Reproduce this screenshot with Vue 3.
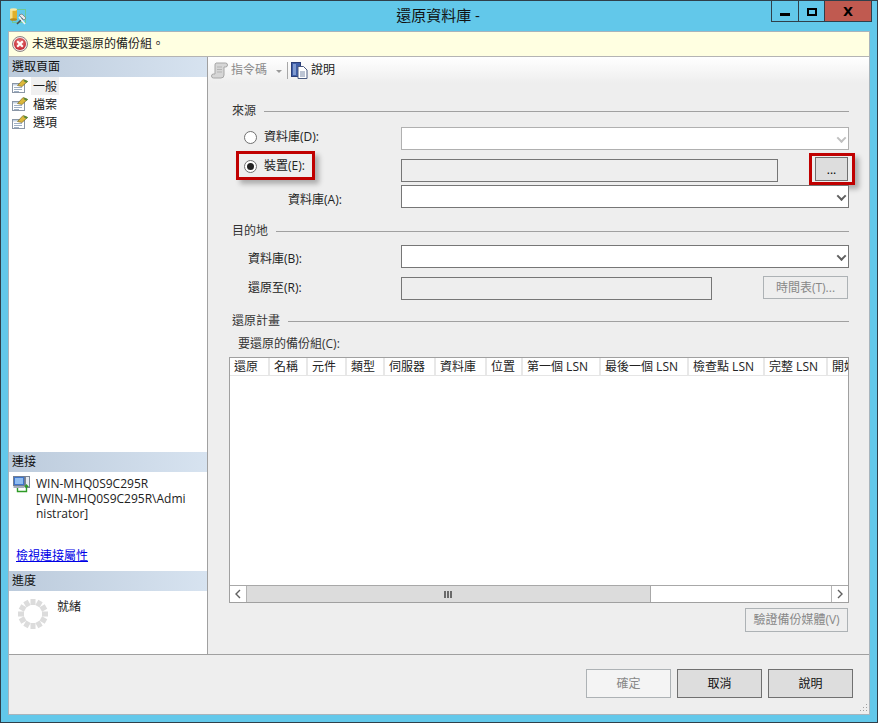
<script setup>
const columns = [
  { label: '還原', width: 40 },
  { label: '名稱', width: 38 },
  { label: '元件', width: 39 },
  { label: '類型', width: 38 },
  { label: '伺服器', width: 51 },
  { label: '資料庫', width: 51 },
  { label: '位置', width: 36 },
  { label: '第一個 LSN', width: 78 },
  { label: '最後一個 LSN', width: 88 },
  { label: '檢查點 LSN', width: 76 },
  { label: '完整 LSN', width: 63 },
  { label: '開始日期', width: 60 },
]

const pages = ['一般', '檔案', '選項']

const spinnerDots = Array.from({ length: 12 }, (_, i) => i * 30)
</script>

<template>
  <div class="window">
    <header class="titlebar">
      <svg class="app-icon" width="17" height="17" viewBox="0 0 17 17">
        <rect x="2.5" y="1.5" width="13" height="13" fill="none" stroke="#7ac943" stroke-dasharray="1 1" />
        <rect x="0" y="1.5" width="7" height="10" fill="#e0b02c" />
        <rect x="0" y="1.5" width="2.5" height="10" fill="#f6e08c" />
        <ellipse cx="3.5" cy="1.5" rx="3.5" ry="1.3" fill="#f8e9a8" />
        <ellipse cx="3.5" cy="11.5" rx="3.5" ry="1.3" fill="#b98a1c" />
        <path d="M7 16 L14 9" stroke="#4a4a4a" stroke-width="1.6" />
        <path d="M9 7 L12 6 L16 10 L14 12 Z" fill="#e8e8e8" stroke="#666" stroke-width="0.6" />
        <path d="M9 9 L15 16" stroke="#f4f4f4" stroke-width="1.6" />
      </svg>
      <h1 class="title">還原資料庫 -</h1>
      <div class="win-controls">
        <button class="win-btn min"><span class="min-glyph"></span></button>
        <button class="win-btn max"><span class="max-glyph"></span></button>
        <button class="win-btn close"><span class="close-glyph">X</span></button>
      </div>
    </header>

    <div class="client">
      <div class="message">
        <svg width="16" height="16" viewBox="0 0 16 16">
          <defs>
            <radialGradient id="err" cx="50%" cy="40%" r="60%">
              <stop offset="0" stop-color="#ee8a8a" />
              <stop offset="1" stop-color="#c2202a" />
            </radialGradient>
          </defs>
          <circle cx="8" cy="8" r="7.5" fill="#efe6e6" stroke="#8d8585" />
          <circle cx="8" cy="8" r="6" fill="url(#err)" />
          <path d="M5.2 5.2 L10.8 10.8 M10.8 5.2 L5.2 10.8" stroke="#fff" stroke-width="2" />
        </svg>
        <span>未選取要還原的備份組。</span>
      </div>

      <div class="body">
        <aside class="sidebar">
          <div class="side-head">選取頁面</div>
          <ul class="pages">
            <li v-for="(page, i) in pages" :key="page" class="page-item">
              <svg width="16" height="14" viewBox="0 0 16 14">
                <rect x="0.5" y="4.5" width="12" height="9" fill="#fff" stroke="#8a96a6" />
                <rect x="1" y="5" width="11" height="1.5" fill="#c4d2e2" />
                <path d="M2 8.5 H10 M2 10.5 H10 M2 12.5 H7" stroke="#9fb0c4" />
                <path d="M5.5 6.5 L11 0.5 L15.5 2.5 L10 7.5 Z" fill="#dcb83c" stroke="#6b5a1c" stroke-width="0.6" />
                <path d="M12.5 0.5 L16 2.2 L14.5 4 L11.5 2 Z" fill="#5c8a3a" />
              </svg>
              <span :class="{ active: i === 0 }">{{ page }}</span>
            </li>
          </ul>

          <div class="side-head conn-head">連接</div>
          <div class="conn">
            <svg width="17" height="17" viewBox="0 0 17 17">
              <rect x="0.5" y="0.5" width="11" height="9" fill="#3e74cc" stroke="#707e92" />
              <rect x="2" y="2" width="8" height="6" fill="#8fbcf0" />
              <rect x="0.5" y="10" width="11" height="2" fill="#a4aebc" />
              <rect x="12.5" y="0.5" width="4" height="11" fill="#e6eaf0" stroke="#7a8494" />
              <path d="M4.5 12 V15.5 H13.5 V10" fill="none" stroke="#2e9a26" stroke-width="1.4" />
              <path d="M11 11 L13.5 8 L16 11 Z" fill="#2e9a26" />
            </svg>
            <div class="conn-text">WIN-MHQ0S9C295R<br />[WIN-MHQ0S9C295R\Admi<br />nistrator]</div>
          </div>
          <a class="conn-link" href="#">檢視連接屬性</a>

          <div class="side-head">進度</div>
          <div class="progress">
            <svg width="30" height="30" viewBox="0 0 30 30">
              <rect
                v-for="deg in spinnerDots"
                :key="deg"
                x="12.5"
                y="0"
                width="5"
                height="6"
                fill="#dcdcdc"
                :transform="`rotate(${deg} 15 15)`"
              />
            </svg>
            <span>就緒</span>
          </div>
        </aside>

        <main class="panel">
          <div class="toolbar">
            <svg width="17" height="17" viewBox="0 0 17 17">
              <path d="M5 1 H14.5 A2 2 0 0 1 14.5 5 H13 V13 A3 3 0 0 1 10 16 H2.5 A2 2 0 0 1 2.5 12 H4 V3 A2 2 0 0 1 5 1 Z" fill="#d6d6d6" stroke="#a6a6a6" />
              <path d="M6 5 H11 M6 7.5 H11 M6 10 H11" stroke="#b4b4b4" />
            </svg>
            <span class="tool-off">指令碼</span>
            <span class="tool-caret"></span>
            <span class="tool-sep"></span>
            <svg width="17" height="17" viewBox="0 0 17 17">
              <rect x="0.5" y="0.5" width="9" height="14" fill="#3f5fa8" stroke="#2b3f78" />
              <rect x="2" y="2" width="3" height="11" fill="#7f9ad0" />
              <path d="M7 4.5 H12.5 L16 8 V16.5 H7 Z" fill="#fff" stroke="#4a5a80" />
              <path d="M9 10 H14 M9 12 H14 M9 14 H14" stroke="#7a8aa8" />
            </svg>
            <span>說明</span>
          </div>

          <div class="form">
            <div class="legend first"><span>來源</span><i></i></div>

            <div class="row r-d">
              <label class="radio-label"><span class="radio"></span>資料庫(D):</label>
              <div class="field off combo"><span class="chev off-chev"></span></div>
            </div>

            <div class="row r-e">
              <label class="radio-label">
                <span class="radio on"></span>裝置(E):
                <span class="callout callout-radio"></span>
              </label>
              <div class="field readonly device"></div>
              <button class="browse">
                ...
                <span class="callout callout-browse"></span>
              </button>
            </div>

            <div class="row r-a">
              <label class="text-label indent">資料庫(A):</label>
              <div class="field combo"><span class="chev"></span></div>
            </div>

            <div class="legend second"><span>目的地</span><i></i></div>

            <div class="row r-b">
              <label class="text-label small-indent">資料庫(B):</label>
              <div class="field combo"><span class="chev"></span></div>
            </div>

            <div class="row r-r">
              <label class="text-label small-indent">還原至(R):</label>
              <div class="field readonly target"></div>
              <button class="btn disabled schedule">時間表(T)...</button>
            </div>

            <div class="legend third"><span>還原計畫</span><i></i></div>
            <div class="grid-label">要還原的備份組(C):</div>

            <div class="grid">
              <div class="grid-head">
                <div
                  v-for="col in columns"
                  :key="col.label"
                  class="grid-col"
                  :style="{ width: col.width + 'px' }"
                >{{ col.label }}</div>
              </div>
              <div class="grid-body"></div>
              <div class="hscroll">
                <span class="arrow">
                  <svg width="8" height="10" viewBox="0 0 8 10"><path d="M6 1 L2 5 L6 9" fill="none" stroke="#606060" stroke-width="1.4" /></svg>
                </span>
                <div class="thumb">
                  <span class="grip"></span>
                </div>
                <div class="track"></div>
                <span class="arrow right">
                  <svg width="8" height="10" viewBox="0 0 8 10"><path d="M2 1 L6 5 L2 9" fill="none" stroke="#606060" stroke-width="1.4" /></svg>
                </span>
              </div>
            </div>

            <div class="verify-row">
              <button class="btn disabled verify">驗證備份媒體(V)</button>
            </div>
          </div>
        </main>
      </div>

      <footer class="footer">
        <button class="btn disabled big ok">確定</button>
        <button class="btn big">取消</button>
        <button class="btn big">說明</button>
        <svg class="size-grip" width="10" height="10" viewBox="0 0 10 10">
          <path d="M8 1 H9 V2 H8 Z M5 4 H6 V5 H5 Z M8 4 H9 V5 H8 Z M2 7 H3 V8 H2 Z M5 7 H6 V8 H5 Z M8 7 H9 V8 H8 Z" fill="#a0a0a0" />
        </svg>
      </footer>
    </div>
  </div>
</template>

<style>
html, body { margin: 0; background: #62c8ea; }
</style>

<style scoped>
* { box-sizing: border-box; }

.window {
  width: 878px;
  height: 723px;
  display: flex;
  flex-direction: column;
  background: #62c8ea;
  border: 1px solid #2f3f4a;
  padding: 0 7px 7px;
  overflow: hidden;
  font: 12px/16px "Open Sans", "Noto Sans CJK TC", sans-serif;
  color: #1a1a1a;
}

.titlebar {
  height: 30px;
  flex: none;
  display: flex;
  align-items: center;
  position: relative;
}
.app-icon { margin: 0 0 0 2px; }
.title {
  position: absolute;
  left: 0;
  right: 2px;
  top: 4px;
  margin: 0;
  text-align: center;
  font-size: 15px;
  line-height: 20px;
  font-weight: 400;
  color: #111;
}
.win-controls {
  position: absolute;
  right: -2px;
  top: 0;
  display: flex;
  height: 21px;
  border: 1px solid #2f3f4a;
  border-top: 0;
}
.win-btn {
  border: 0;
  padding: 0;
  background: #62c8ea;
  display: flex;
  align-items: center;
  justify-content: center;
}
.win-btn.min { width: 27px; border-right: 1px solid #2f3f4a; }
.win-btn.max { width: 26px; border-right: 1px solid #2f3f4a; }
.win-btn.close { width: 46px; background: #c05a50; }
.min-glyph { width: 10px; height: 3px; background: #000; margin-top: 6px; }
.max-glyph { width: 10px; height: 8px; border: 2px solid #000; margin-top: 2px; }
.close-glyph { font: 700 13px/13px "DejaVu Sans", sans-serif; color: #000; }

.client {
  flex: 1;
  min-height: 0;
  display: flex;
  flex-direction: column;
  background: #eeeeee;
  border: 1px solid #a8b4bc;
}

.message {
  height: 25px;
  flex: none;
  display: flex;
  align-items: center;
  gap: 4px;
  padding-left: 3px;
  background: #ffffe1;
  border-bottom: 1px solid #b4b4b4;
}

.body {
  height: 598px;
  flex: none;
  display: flex;
  border-bottom: 1px solid #a0a0a0;
}

.sidebar {
  width: 199px;
  flex: none;
  display: flex;
  flex-direction: column;
  background: #fff;
  border-right: 1px solid #a0a0a0;
}
.side-head {
  height: 20px;
  flex: none;
  padding: 1px 0 0 3px;
  line-height: 18px;
  color: #111;
  background: linear-gradient(90deg, #bccbdc, #d7e3f0);
}
.pages {
  list-style: none;
  margin: 0;
  padding: 0 0 0 3px;
  height: 375px;
  flex: none;
}
.page-item {
  height: 18px;
  display: flex;
  align-items: center;
  gap: 3px;
}
.page-item span { padding: 1px 2px 0; line-height: 17px; }
.page-item .active { background: #f0f0f0; }
.conn {
  height: 76px;
  flex: none;
  display: flex;
  gap: 6px;
  padding: 4px 0 0 4px;
}
.conn svg { flex: none; }
.conn-text { line-height: 15px; color: #222; white-space: nowrap; }
.conn-link {
  height: 23px;
  flex: none;
  padding-left: 7px;
  color: #0000e6;
  line-height: 16px;
  text-decoration: underline;
}
.progress {
  flex: 1;
  display: flex;
  gap: 9px;
  padding: 8px 0 0 9px;
  color: #222;
}

.panel {
  flex: 1;
  min-width: 0;
  display: flex;
  flex-direction: column;
  background: #eeeeee;
}
.toolbar {
  height: 26px;
  flex: none;
  display: flex;
  align-items: center;
  padding-left: 3px;
  gap: 3px;
  background: linear-gradient(#ffffff, #eeeeee);
}
.tool-off { color: #8a8a8a; }
.tool-caret {
  width: 0;
  height: 0;
  margin: 2px 2px 0 6px;
  border: 3px solid transparent;
  border-top: 3px solid #9a9a9a;
  border-bottom: 0;
}
.tool-sep { width: 1px; height: 17px; background: #a8a8a8; }

.form { flex: 1; position: relative; padding: 0 20px 0 21px; }

.legend {
  display: flex;
  align-items: center;
  gap: 8px;
  height: 16px;
  padding-left: 3px;
  color: #333;
}
.legend i { flex: 1; height: 1px; background: #a0a0a0; }
.legend.first { margin-top: 20px; }
.legend.second { margin-top: 15px; }
.legend.third { margin-top: 13px; }

.row { display: flex; align-items: flex-start; position: relative; height: 23px; }
.r-d { margin-top: 8px; }
.r-e { margin-top: 9px; }
.r-a { margin-top: 3px; }
.r-b { margin-top: 6px; }
.r-r { margin-top: 9px; }

.radio-label, .text-label {
  width: 172px;
  flex: none;
  display: flex;
  align-items: center;
  position: relative;
  white-space: nowrap;
  color: #222;
}
.radio-label { padding-left: 15px; }
.r-d .radio-label { margin-top: 2px; }
.r-e .radio-label { margin-top: -1px; }
.r-a .text-label { margin-top: 7px; }
.r-b .text-label { margin-top: 6px; }
.r-r .text-label { margin-top: 3px; }
.text-label.indent { padding-left: 59px; }
.text-label.small-indent { padding-left: 19px; }
.radio {
  width: 13px;
  height: 13px;
  margin-right: 7px;
  border: 1px solid #707070;
  border-radius: 50%;
  background: #fff;
  position: relative;
}
.radio.on::after {
  content: "";
  position: absolute;
  left: 2px;
  top: 2px;
  width: 7px;
  height: 7px;
  border-radius: 50%;
  background: #222;
}

.field {
  height: 23px;
  background: #fff;
  border: 1px solid #767676;
  flex: 1;
  position: relative;
}
.field.off { border: 1px solid #b0b0b0; }
.field.readonly { background: #eeeeee; }
.field.device { flex: none; width: 377px; }
.field.target { flex: none; width: 311px; }
.chev {
  position: absolute;
  right: 3px;
  top: 8px;
  width: 7px;
  height: 7px;
  border-right: 2px solid #606060;
  border-bottom: 2px solid #606060;
  transform: rotate(45deg) translate(-1px, -1px);
}
.off-chev { border-color: #c0c0c0; }

.callout {
  position: absolute;
  border: 3px solid #c00000;
  box-shadow: 4px 4px 5px rgba(0, 0, 0, 0.28);
  pointer-events: none;
}
.callout-radio { left: 7px; top: -7px; width: 79px; height: 29px; }
.callout-browse { left: -7px; top: -5px; width: 46px; height: 32px; }

.browse {
  position: relative;
  width: 33px;
  height: 24px;
  margin: -2px 0 0 37px;
  padding: 2px 0 0;
  border: 1px solid #707070;
  background: #dddddd;
  font: inherit;
  line-height: 16px;
}

.btn {
  border: 1px solid #707070;
  background: #dddddd;
  font: inherit;
  padding: 0;
  color: #111;
}
.btn.disabled {
  background: #f0f0f0;
  border-color: #adb2b5;
  color: #888;
}
.schedule { width: 85px; height: 23px; margin: -1px 0 0 51px; background: #eeeeee !important; }

.grid-label { height: 16px; margin: 7px 0 5px; padding-left: 9px; color: #333; }

.grid {
  width: 620px;
  height: 246px;
  display: flex;
  flex-direction: column;
  border: 1px solid #a0a0a0;
  background: #fff;
  overflow: hidden;
}
.grid-head {
  height: 18px;
  flex: none;
  display: flex;
  overflow: hidden;
  background: #fff;
  border-bottom: 1px solid #e5e5e5;
}
.grid-col {
  flex: none;
  padding: 1px 0 0 4px;
  line-height: 16px;
  white-space: nowrap;
  overflow: hidden;
  color: #222;
  border-right: 2px solid #e8e8e8;
}
.grid-body { flex: 1; }
.hscroll {
  height: 16px;
  flex: none;
  display: flex;
  box-sizing: content-box;
  border-top: 1px solid #a8a8a8;
}
.arrow {
  width: 17px;
  flex: none;
  display: flex;
  align-items: center;
  justify-content: center;
  background: #fff;
  border-right: 1px solid #b4b4b4;
}
.arrow.right { border-right: 0; border-left: 1px solid #b4b4b4; }
.thumb {
  width: 404px;
  flex: none;
  display: flex;
  align-items: center;
  justify-content: center;
  background: #dcdcdc;
  border-right: 1px solid #a8a8a8;
}
.grip {
  width: 9px;
  height: 7px;
  background: repeating-linear-gradient(90deg, #6a6a6a 0 2px, transparent 2px 3px);
}
.track { flex: 1; background: #fff; }

.verify-row { display: flex; justify-content: flex-end; margin-top: 5px; }
.verify { width: 103px; height: 24px; margin-right: 1px; background: #eeeeee !important; }

.footer {
  flex: 1;
  position: relative;
  display: flex;
  justify-content: flex-end;
  gap: 6px;
  padding: 14px 16px 0 0;
}
.btn.big { width: 85px; height: 29px; }
.btn.ok { background: #f4f4f4; }
.size-grip { position: absolute; right: 1px; bottom: 1px; }
</style>
